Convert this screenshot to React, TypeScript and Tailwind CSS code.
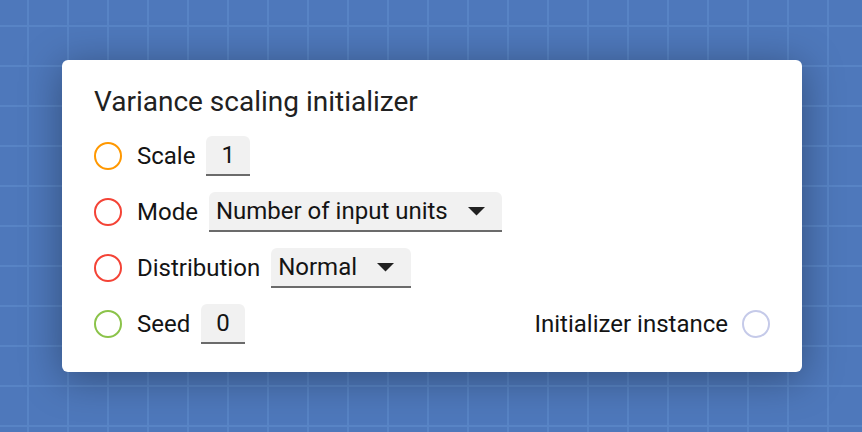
import React from 'react';

const Dot = ({ color }: { color: string }) => (
  <span className={`block w-7 h-7 shrink-0 rounded-full border-2 ${color}`} />
);

const Caret = () => (
  <svg width="17" height="9" viewBox="0 0 17 9" className="shrink-0">
    <path d="M0 0h17L8.5 8.5z" fill="#212121" />
  </svg>
);

const NumberField = ({ value }: { value: string }) => (
  <div className="h-10 px-[15px] flex items-center justify-center bg-[#f1f1f1] rounded-t-md border-b-2 border-[#6b6b6b]">
    {value}
  </div>
);

const SelectField = ({ value }: { value: string }) => (
  <div className="h-10 pl-[7px] pr-[17px] flex items-center gap-[20px] bg-[#f1f1f1] rounded-t-md border-b-2 border-[#6b6b6b]">
    <span>{value}</span>
    <Caret />
  </div>
);

export default function App() {
  return (
    <div
      className="w-full h-[432px] overflow-hidden bg-[#4e78bb] bg-[image:linear-gradient(to_right,#5884c5_2px,transparent_2px),linear-gradient(to_bottom,#5884c5_2px,transparent_2px)] bg-[length:40px_40px] bg-[position:27px_25px] pt-[60px] pl-[62px]"
      style={{ fontFamily: 'Roboto, "Liberation Sans", sans-serif' }}
    >
      {/* Initializer node */}
      <div className="w-[740px] bg-white rounded-md shadow-[0_6px_40px_rgba(0,0,0,0.35)] pt-[28px] pb-5 px-8 text-[24px] text-[#141414]">
        <h2 className="text-[28px] leading-none text-[#212121] mb-3">Variance scaling initializer</h2>

        <div className="h-14 flex items-center">
          <Dot color="border-[#ff9800]" />
          <span className="ml-[15px] mr-[11px]">Scale</span>
          <NumberField value="1" />
        </div>

        <div className="h-14 flex items-center">
          <Dot color="border-[#f44336]" />
          <span className="ml-[15px] mr-[11px]">Mode</span>
          <SelectField value="Number of input units" />
        </div>

        <div className="h-14 flex items-center">
          <Dot color="border-[#f44336]" />
          <span className="ml-[15px] mr-[11px]">Distribution</span>
          <SelectField value="Normal" />
        </div>

        <div className="h-14 flex items-center">
          <Dot color="border-[#8bc34a]" />
          <span className="ml-[15px] mr-[11px]">Seed</span>
          <NumberField value="0" />
          <span className="ml-auto mr-3.5">Initializer instance</span>
          <Dot color="border-[#c5cae9]" />
        </div>
      </div>
    </div>
  );
}
